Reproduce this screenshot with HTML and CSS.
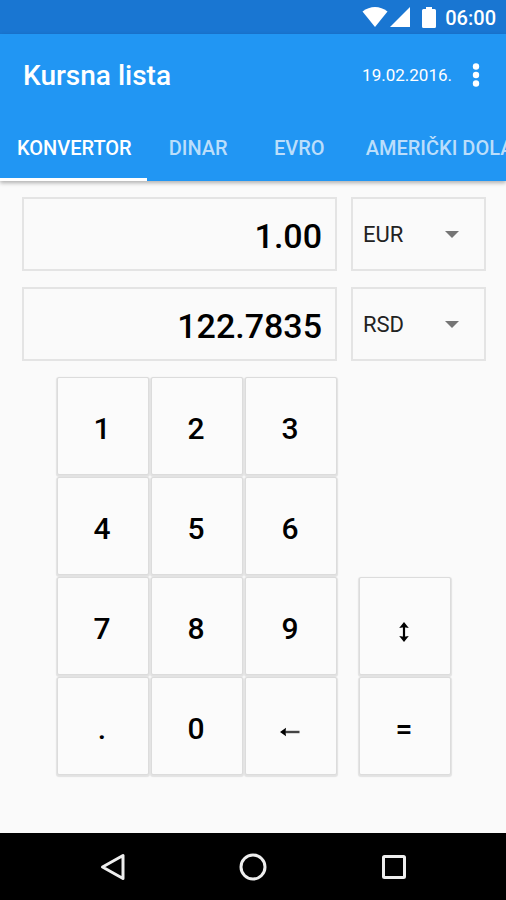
FILE: index.html
```html
<!DOCTYPE html>
<html lang="sr">

<head>
  <meta charset="UTF-8">
  <meta name="viewport" content="width=device-width, initial-scale=1.0">
  <title>Kursna lista</title>
  <link rel="stylesheet" href="styles.css">
</head>

<body>

  <div class="status-bar">
    <svg class="wifi" width="26" height="20" viewBox="0 0 26 20">
      <path d="M13 20 L0.500 4.500 C8 -1.500 18 -1.500 25.500 4.500 Z" fill="#fff"/>
    </svg>
    <svg class="signal" width="20" height="20" viewBox="0 0 20 20">
      <path d="M20 0 V20 H0 Z" fill="#fff"/>
    </svg>
    <svg class="battery" width="14" height="21" viewBox="0 0 14 21">
      <path d="M4 0 H10 V2 H12.500 Q14 2 14 3.500 V19.500 Q14 21 12.500 21 H1.500 Q0 21 0 19.500 V3.500 Q0 2 1.500 2 H4 Z" fill="#fff"/>
    </svg>
    <span class="clock">06:00</span>
  </div>

  <header class="app-bar">
    <div class="toolbar">
      <h1>Kursna lista</h1>
      <span class="date">19.02.2016.</span>
      <button type="button" class="menu-btn" aria-label="Meni">
        <svg width="8" height="24" viewBox="0 0 8 24" fill="#fff">
          <circle cx="4" cy="3.500" r="3.200"/>
          <circle cx="4" cy="12" r="3.200"/>
          <circle cx="4" cy="20.500" r="3.200"/>
        </svg>
      </button>
    </div>
    <nav class="tabs">
      <a href="#konvertor" class="tab active">KONVERTOR</a>
      <a href="#dinar" class="tab">DINAR</a>
      <a href="#evro" class="tab">EVRO</a>
      <a href="#dolar" class="tab">AMERIČKI DOLAR</a>
    </nav>
  </header>

  <main class="converter" id="konvertor">
    <div class="row">
      <input type="text" class="amount" value="1.00" aria-label="Iznos">
      <div class="currency">
        <select aria-label="Iz valute">
          <option>EUR</option>
          <option>RSD</option>
          <option>USD</option>
        </select>
      </div>
    </div>
    <div class="row">
      <input type="text" class="amount" value="122.7835" aria-label="Rezultat" readonly>
      <div class="currency">
        <select aria-label="U valutu">
          <option>RSD</option>
          <option>EUR</option>
          <option>USD</option>
        </select>
      </div>
    </div>

    <div class="keypad">
      <div class="digits">
        <button type="button" class="key">1</button>
        <button type="button" class="key">2</button>
        <button type="button" class="key">3</button>
        <button type="button" class="key">4</button>
        <button type="button" class="key">5</button>
        <button type="button" class="key">6</button>
        <button type="button" class="key">7</button>
        <button type="button" class="key">8</button>
        <button type="button" class="key">9</button>
        <button type="button" class="key">.</button>
        <button type="button" class="key">0</button>
        <button type="button" class="key" aria-label="Obriši">
          <svg class="key-icon" width="20" height="10" viewBox="0 0 20 10">
            <path d="M5 5 H19.500" stroke="#444" stroke-width="2.400" fill="none"/>
            <path d="M0 5 L6 0.800 L5.500 5 L6 9.200 Z" fill="#000"/>
          </svg>
        </button>
      </div>
      <div class="actions">
        <button type="button" class="key" aria-label="Zameni valute">
          <svg class="key-icon" width="10" height="20" viewBox="0 0 10 20">
            <path d="M5 3 V17" stroke="#000" stroke-width="2.200" fill="none"/>
            <path d="M5 0 L9.800 6 L5 5.200 L0.200 6 Z M5 20 L9.800 14 L5 14.800 L0.200 14 Z" fill="#000"/>
          </svg>
        </button>
        <button type="button" class="key">=</button>
      </div>
    </div>
  </main>

  <footer class="nav-bar">
    <button type="button" aria-label="Nazad">
      <svg width="28" height="28" viewBox="0 0 28 28">
        <path d="M24 2.500 V25.500 L3.500 14 Z" stroke="#eee" stroke-width="3" stroke-linejoin="round" fill="none"/>
      </svg>
    </button>
    <button type="button" aria-label="Početna">
      <svg width="28" height="28" viewBox="0 0 28 28">
        <circle cx="14" cy="14" r="12" stroke="#eee" stroke-width="3" fill="none"/>
      </svg>
    </button>
    <button type="button" aria-label="Aplikacije">
      <svg width="28" height="28" viewBox="0 0 28 28">
        <rect x="3.500" y="3.500" width="21" height="21" rx="1" stroke="#eee" stroke-width="3" fill="none"/>
      </svg>
    </button>
  </footer>

</body>

</html>
```

FILE: styles.css
```css
* {
  box-sizing: border-box;
}

body {
  margin: 0;
  min-height: 100vh;
  display: flex;
  flex-direction: column;
  font-family: Roboto, "Noto Sans", sans-serif;
  background: #fafafa;
  color: #000;
  overflow-x: hidden;
}

button,
input,
select {
  font-family: inherit;
  color: inherit;
}

.status-bar {
  height: 34px;
  padding: 0 10px;
  display: flex;
  align-items: center;
  justify-content: flex-end;
  background: #1976d2;
  color: #fff;
}

.signal {
  margin-left: 2px;
}

.battery {
  margin-left: 12px;
}

.clock {
  margin-left: 9px;
  padding-top: 2px;
  font-size: 20px;
  font-weight: 500;
}

.app-bar {
  background: #2196f3;
  color: #fff;
  box-shadow: 0 2px 4px rgba(0, 0, 0, 0.3);
}

.toolbar {
  height: 80px;
  padding: 2px 16px 0 23px;
  display: flex;
  align-items: center;
}

.toolbar h1 {
  flex: 1;
  margin: 0;
  font-size: 28px;
  font-weight: 500;
}

.date {
  font-size: 17px;
}

.menu-btn {
  width: 28px;
  height: 48px;
  margin-left: 10px;
  padding: 0;
  display: flex;
  align-items: center;
  justify-content: center;
  background: none;
  border: none;
}

.tabs {
  height: 67px;
  display: flex;
  overflow: hidden;
}

.tab {
  flex: none;
  min-width: 101px;
  padding: 3px 15px 0 17px;
  display: flex;
  align-items: center;
  justify-content: center;
  border-bottom: 3px solid transparent;
  color: #bbdefb;
  font-size: 20px;
  font-weight: 500;
  text-decoration: none;
  white-space: nowrap;
}

.tab.active {
  color: #fff;
  border-bottom-color: #fff;
}

.converter {
  flex: 1;
  padding: 16px 20px 16px 22px;
  display: flex;
  flex-direction: column;
  gap: 16px;
}

.row {
  display: flex;
  gap: 14px;
}

.amount {
  flex: 1;
  min-width: 0;
  height: 74px;
  padding: 4px 13px 0;
  background: none;
  border: 2px solid #e4e4e4;
  outline: none;
  font-size: 34px;
  font-weight: 500;
  text-align: right;
}

.currency {
  position: relative;
  width: 135px;
}

.currency select {
  width: 100%;
  height: 74px;
  padding: 0 40px 0 10px;
  appearance: none;
  background: none;
  border: 2px solid #e4e4e4;
  border-radius: 0;
  color: #222;
  font-size: 22px;
}

.currency::after {
  content: "";
  position: absolute;
  top: 34px;
  right: 27px;
  border: 7px solid transparent;
  border-top-color: #757575;
  border-bottom: none;
  pointer-events: none;
}

.keypad {
  display: flex;
  justify-content: center;
  align-items: flex-end;
  gap: 22px;
}

.digits {
  display: grid;
  grid-template-columns: repeat(3, 92px);
  gap: 2px;
}

.actions {
  width: 92px;
  display: grid;
  gap: 2px;
}

.key {
  height: 98px;
  padding: 4px 2px 0 0;
  display: flex;
  align-items: center;
  justify-content: center;
  background: #fbfbfb;
  border: 1px solid #dcdcdc;
  border-radius: 2px;
  box-shadow: 0 1px 1px 1px #e2e2e2;
  font-size: 30px;
  font-weight: 500;
}

.key-icon {
  margin-top: 8px;
}

.nav-bar {
  height: 67px;
  padding: 0 42px 0 43px;
  display: flex;
  align-items: center;
  background: #000;
}

.nav-bar button {
  flex: 1;
  height: 100%;
  padding: 0;
  display: flex;
  align-items: center;
  justify-content: center;
  background: none;
  border: none;
}
```
